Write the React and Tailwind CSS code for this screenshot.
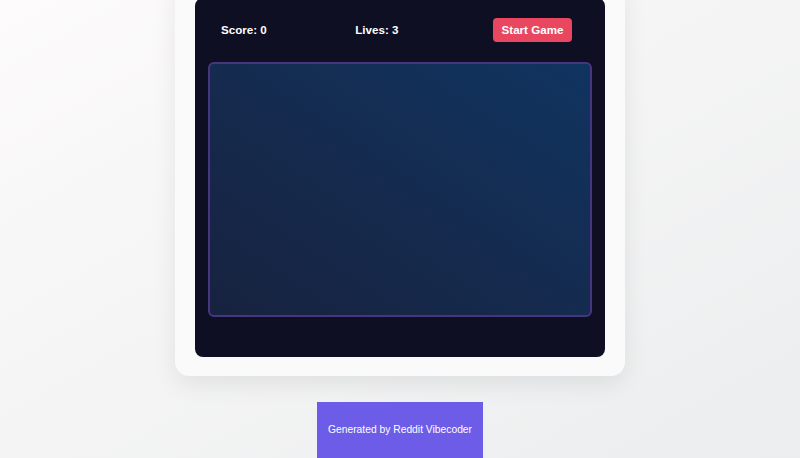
import React from "react";

export default function App() {
    return (
        <div className="min-h-screen overflow-hidden bg-gradient-to-br from-[#fdfbfb] to-[#ebedee] flex flex-col items-center font-['Liberation_Sans',Arial,sans-serif]">

            {/* game card */}
            <div className="-mt-[22px] w-[450px] px-5 pt-5 pb-[19px] bg-[#fafafa] rounded-[14px] shadow-[0_8px_24px_rgba(0,0,0,0.08)]">
                <div className="bg-[#0f0f23] rounded-lg px-[13px] pt-5 pb-10">

                    {/* header */}
                    <div className="flex items-center justify-between pl-[13px] pr-5 h-6 text-white font-bold text-[11.6px]">
                        <span>Score: 0</span>
                        <span className="-ml-[6px]">Lives: 3</span>
                        <button className="h-6 w-[79px] bg-[#e8475f] rounded-[4px] text-white font-bold text-[11.6px]">
                            Start Game
                        </button>
                    </div>

                    {/* playfield */}
                    <div className="mt-5 h-[255px] rounded-md border-2 border-[#47357f] bg-gradient-to-tr from-[#17223f] to-[#0f3460]"></div>
                </div>
            </div>

            {/* footer */}
            <div className="mt-[26px] w-[166px] h-14 bg-[#6c5ce7] text-white text-[10.3px] flex items-center justify-center">
                Generated by Reddit Vibecoder
            </div>
        </div>
    );
}
